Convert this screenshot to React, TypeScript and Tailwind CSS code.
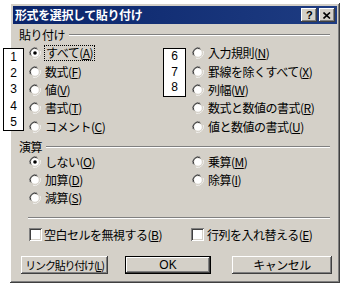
import type React from "react";

const raised =
  "shadow-[inset_-1px_-1px_#404040,inset_1px_1px_#ffffff,inset_-2px_-2px_#808080,inset_2px_2px_#d4d0c8]";
const sunken =
  "shadow-[inset_1px_1px_#808080,inset_-1px_-1px_#ffffff,inset_2px_2px_#404040,inset_-2px_-2px_#d4d0c8]";

function Radio({ checked }: { checked?: boolean }) {
  return (
    <svg width="12" height="12" viewBox="0 0 12 12" className="shrink-0">
      <path d="M1 8 A5.5 5.5 0 0 1 8 1" fill="none" stroke="#808080" strokeWidth="1" />
      <path d="M2.2 8.5 A4.5 4.5 0 0 1 8.5 2.2" fill="none" stroke="#404040" strokeWidth="1" />
      <path d="M4 11 A5.5 5.5 0 0 0 11 4" fill="none" stroke="#ffffff" strokeWidth="1" />
      <path d="M3.5 9.8 A4.5 4.5 0 0 0 9.8 3.5" fill="none" stroke="#d4d0c8" strokeWidth="1" />
      <circle cx="6" cy="6" r="3.8" fill="#ffffff" />
      {checked && <circle cx="6" cy="6" r="1.8" fill="#000000" />}
    </svg>
  );
}

function Check() {
  return <div className={`w-[13px] h-[13px] shrink-0 bg-white ${sunken}`} />;
}

type Opt = { text: string; key: string; checked?: boolean; focus?: boolean };

function Label({ o }: { o: Opt }) {
  return (
    <span
      className={`whitespace-nowrap ${
        o.focus ? "outline-1 outline-dotted outline-black outline-offset-0 px-[1px]" : ""
      }`}
    >
      {o.text}(<u>{o.key}</u>)
    </span>
  );
}

function RadioRow({ o, h }: { o: Opt; h: string }) {
  return (
    <div className={`flex items-center gap-[4px] ${h}`}>
      <Radio checked={o.checked} />
      <Label o={o} />
    </div>
  );
}

function Section({ title }: { title: string }) {
  return (
    <div className="flex items-center h-[12px] pl-[6px] pr-[7px]">
      <span>{title}</span>
      <div className="flex-1 ml-[4px] h-[2px] border-t border-b border-t-[#808080] border-b-white" />
    </div>
  );
}

const pasteLeft: Opt[] = [
  { text: "すべて", key: "A", checked: true, focus: true },
  { text: "数式", key: "F" },
  { text: "値", key: "V" },
  { text: "書式", key: "T" },
  { text: "コメント", key: "C" },
];

const pasteRight: Opt[] = [
  { text: "入力規則", key: "N" },
  { text: "罫線を除くすべて", key: "X" },
  { text: "列幅", key: "W" },
  { text: "数式と数値の書式", key: "R" },
  { text: "値と数値の書式", key: "U" },
];

const opLeft: Opt[] = [
  { text: "しない", key: "O", checked: true },
  { text: "加算", key: "D" },
  { text: "減算", key: "S" },
];

const opRight: Opt[] = [
  { text: "乗算", key: "M" },
  { text: "除算", key: "I" },
];

function Button({ children, w, isDefault }: { children: React.ReactNode; w: string; isDefault?: boolean }) {
  return (
    <div
      className={`${w} h-[18px] flex items-center justify-center bg-[#d4d0c8] ${
        isDefault ? "border border-black" : ""
      } `}
    >
      <div className={`w-full h-full flex items-center justify-center whitespace-nowrap ${raised}`}>
        {children}
      </div>
    </div>
  );
}

function TitleButton({ children }: { children: React.ReactNode }) {
  return (
    <div className={`w-[16px] h-[14px] bg-[#d4d0c8] flex items-center justify-center ${raised}`}>
      {children}
    </div>
  );
}

export default function App() {
  return (
    <div
      className="relative w-[346px] h-[287px] bg-white overflow-hidden text-[12px] leading-[14px] tracking-[-0.5px] text-black"
      style={{ fontFamily: '"Noto Sans CJK JP", "Noto Sans", sans-serif' }}
    >
      <div className={`ml-[10px] mt-[3px] w-[330px] h-[280px] bg-[#d4d0c8] p-[3px] flex flex-col ${raised}`}>
        {/* title bar */}
        <div className="h-[18px] flex items-center pl-[2px] pr-[2px] bg-gradient-to-r from-[#0a246a] to-[#1e3c82]">
          <span className="flex-1 font-bold text-white text-[12px] tracking-[-0.4px]">形式を選択して貼り付け</span>
          <TitleButton>
            <span className="font-bold text-[11px] leading-none" style={{ fontFamily: '"Liberation Sans", sans-serif' }}>
              ?
            </span>
          </TitleButton>
          <div className="w-[2px]" />
          <TitleButton>
            <svg width="8" height="7" viewBox="0 0 8 7">
              <path d="M0.5 0.5 L7 6.5 M7 0.5 L0.5 6.5" stroke="#000" strokeWidth="1.6" />
            </svg>
          </TitleButton>
        </div>

        {/* paste */}
        <div className="mt-[5px]">
          <Section title="貼り付け" />
        </div>
        <div className="mt-[3px] pl-[16px] grid grid-cols-[163px_1fr]">
          <div className="flex flex-col">
            {pasteLeft.map((o) => (
              <RadioRow key={o.key} o={o} h="h-[18.4px]" />
            ))}
          </div>
          <div className="flex flex-col">
            {pasteRight.map((o) => (
              <RadioRow key={o.key} o={o} h="h-[18.4px]" />
            ))}
          </div>
        </div>

        {/* operation */}
        <div className="mt-[5px]">
          <Section title="演算" />
        </div>
        <div className="pl-[16px] grid grid-cols-[163px_1fr]">
          <div className="flex flex-col">
            {opLeft.map((o) => (
              <RadioRow key={o.key} o={o} h="h-[18px]" />
            ))}
          </div>
          <div className="flex flex-col">
            {opRight.map((o) => (
              <RadioRow key={o.key} o={o} h="h-[18px]" />
            ))}
          </div>
        </div>

        {/* separator */}
        <div className="mt-[10px] ml-[15px] mr-[7px] h-[2px] border-t border-b border-t-[#808080] border-b-white" />

        {/* checkboxes */}
        <div className="mt-[9px] pl-[16px] grid grid-cols-[162px_1fr] h-[14px]">
          <div className="flex items-center gap-[2px]">
            <Check />
            <span className="whitespace-nowrap">空白セルを無視する(<u>B</u>)</span>
          </div>
          <div className="flex items-center gap-[3px]">
            <Check />
            <span className="whitespace-nowrap">行列を入れ替える(<u>E</u>)</span>
          </div>
        </div>

        {/* buttons */}
        <div className="mt-[14px] pl-[8px] flex">
          <Button w="w-[87px]">
            <span className="tracking-[-1.2px] text-[11px]">リンク貼り付け(<u>L</u>)</span>
          </Button>
          <div className="w-[17px]" />
          <Button w="w-[86px]" isDefault>
            <span style={{ fontFamily: '"Liberation Sans", sans-serif' }} className="tracking-normal">
              OK
            </span>
          </Button>
          <div className="w-[21px]" />
          <Button w="w-[100px]">
            <span>キャンセル</span>
          </Button>
        </div>
      </div>

      {/* numbered annotation boxes */}
      <div
        className="absolute left-[3px] top-[48px] w-[21px] h-[83px] bg-white border border-black flex flex-col items-center text-[12px] leading-[16.2px] tracking-normal"
        style={{ fontFamily: '"Liberation Sans", sans-serif' }}
      >
        {["1", "2", "3", "4", "5"].map((n) => (
          <span key={n}>{n}</span>
        ))}
      </div>
      <div
        className="absolute left-[163px] top-[48px] w-[23px] h-[49px] bg-white border border-black flex flex-col items-center text-[12px] leading-[15.7px] tracking-normal"
        style={{ fontFamily: '"Liberation Sans", sans-serif' }}
      >
        {["6", "7", "8"].map((n) => (
          <span key={n}>{n}</span>
        ))}
      </div>
    </div>
  );
}
